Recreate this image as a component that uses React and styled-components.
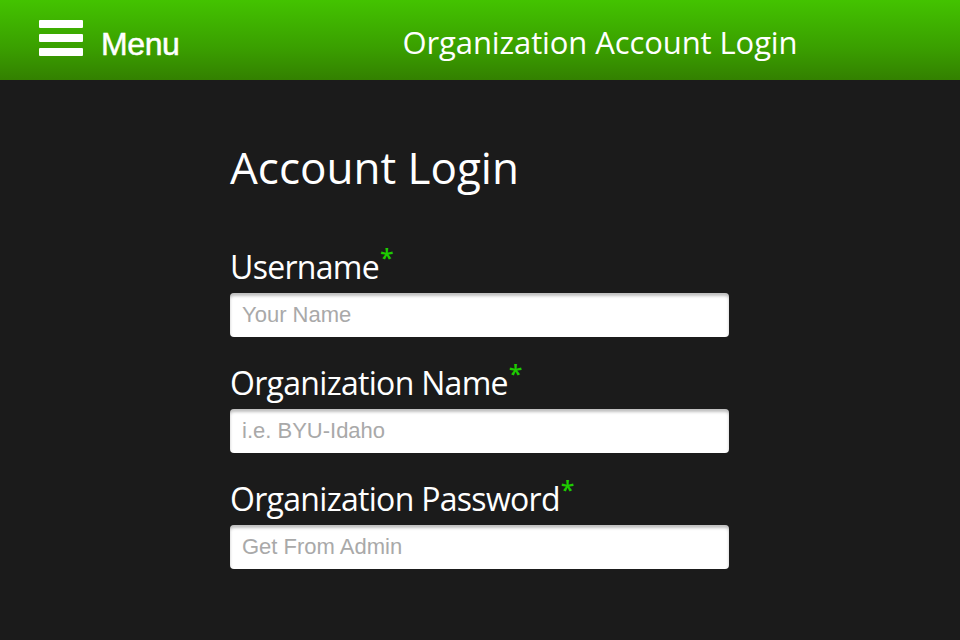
import React from "react";
import styled, { createGlobalStyle } from "styled-components";

const GlobalStyle = createGlobalStyle`
  html, body {
    margin: 0;
    padding: 0;
    background-color: #1b1b1b;
  }
  body {
    font-family: "Open Sans", "Liberation Sans", sans-serif;
    color: white;
  }
  * {
    box-sizing: border-box;
  }
`;

const Page = styled.div`
  width: 960px;
  min-height: 640px;
  background-color: #1b1b1b;
  display: flex;
  flex-direction: column;
`;

const Header = styled.header`
  height: 80px;
  display: flex;
  align-items: center;
  background: linear-gradient(to bottom, #43c300 0%, #3a9f00 60%, #338000 100%);
`;

const MenuButton = styled.div`
  width: 240px;
  height: 100%;
  display: flex;
  align-items: center;
  padding-left: 39px;
  gap: 18px;
  cursor: pointer;
`;

const Burger = styled.div`
  width: 44px;
  display: flex;
  flex-direction: column;
  gap: 6px;
  margin-top: -4px;
`;

const Bar = styled.span`
  display: block;
  height: 8px;
  background-color: white;
  border-radius: 1px;
`;

const MenuText = styled.span`
  font-family: "Liberation Sans", Arial, sans-serif;
  font-size: 32px;
  font-weight: 400;
  letter-spacing: -0.4px;
  -webkit-text-stroke: 0.5px white;
  margin-top: 8px;
`;

const HeaderTitle = styled.h1`
  flex: 1;
  margin: 3px 0 0;
  text-align: center;
  font-size: 31px;
  font-weight: 400;
  letter-spacing: -0.1px;
`;

const Main = styled.main`
  width: 500px;
  margin: 0 auto;
  padding-top: 59px;
  display: flex;
  flex-direction: column;
`;

const PageTitle = styled.h2`
  margin: 0 0 49px;
  font-size: 44px;
  font-weight: 400;
  line-height: 57px;
`;

const Field = styled.div`
  display: flex;
  flex-direction: column;
  margin-bottom: 24px;
`;

const Label = styled.label`
  font-size: 32px;
  line-height: 44px;
  letter-spacing: -0.7px;
  margin-bottom: 4px;
`;

const Required = styled.sup`
  color: #1ecb00;
  font-size: 25px;
  font-weight: 600;
  vertical-align: top;
  line-height: 24px;
  margin-left: 1px;
`;

const Input = styled.input`
  width: 499px;
  height: 44px;
  border: none;
  border-radius: 4px;
  background-color: white;
  box-shadow: inset 0 3px 3px rgba(0, 0, 0, 0.25);
  padding: 0 12px;
  font-family: "Liberation Sans", Arial, sans-serif;
  font-size: 22px;
  color: #333;
  outline: none;
  &::placeholder {
    color: #a9a9a9;
  }
`;

const fields = [
  { id: "username", label: "Username", placeholder: "Your Name" },
  { id: "orgname", label: "Organization Name", placeholder: "i.e. BYU-Idaho" },
  { id: "orgpass", label: "Organization Password", placeholder: "Get From Admin" },
];

export default function App() {
  return (
    <>
      <GlobalStyle />
      <Page>
        <Header>
          <MenuButton>
            <Burger>
              <Bar />
              <Bar />
              <Bar />
            </Burger>
            <MenuText>Menu</MenuText>
          </MenuButton>
          <HeaderTitle>Organization Account Login</HeaderTitle>
        </Header>
        <Main>
          <PageTitle>Account Login</PageTitle>
          {fields.map((f) => (
            <Field key={f.id}>
              <Label htmlFor={f.id}>
                {f.label}
                <Required>*</Required>
              </Label>
              <Input id={f.id} placeholder={f.placeholder} />
            </Field>
          ))}
        </Main>
      </Page>
    </>
  );
}
